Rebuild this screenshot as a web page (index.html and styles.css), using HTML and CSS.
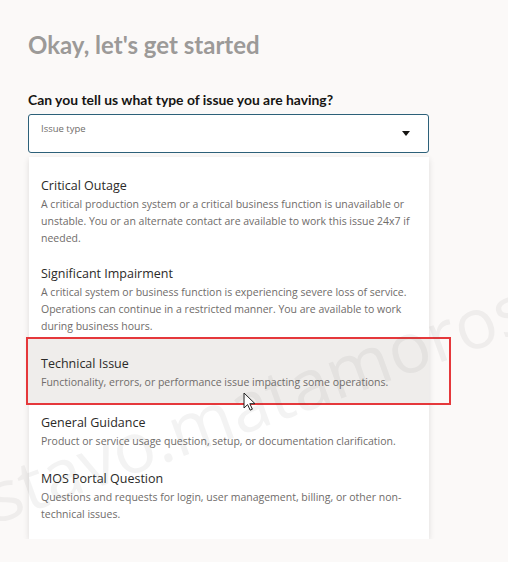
FILE: index.html
```html
<!DOCTYPE html>
<html lang="en">
<head>
  <meta charset="UTF-8" />
  <meta name="viewport" content="width=device-width, initial-scale=1.0"/>
  <title>Create service request</title>
  <link rel="stylesheet" href="styles.css">
</head>
<body>

  <main class="page">
    <h1>Okay, let's get started</h1>

    <p class="question">Can you tell us what type of issue you are having?</p>

    <div class="select">
      <span class="select-label">Issue type</span>
      <svg class="select-arrow" width="8" height="5" viewBox="0 0 8 5"><path d="M0 0h8L4 5z" fill="#161513"/></svg>
    </div>

    <ul class="menu">
      <li class="option">
        <div class="option-title">Critical Outage</div>
        <div class="option-desc">A critical production system or a critical business function is unavailable or unstable. You or an alternate contact are available to work this issue 24x7 if needed.</div>
      </li>
      <li class="option">
        <div class="option-title">Significant Impairment</div>
        <div class="option-desc">A critical system or business function is experiencing severe loss of service. Operations can continue in a restricted manner. You are available to work during business hours.</div>
      </li>
      <li class="option hover">
        <div class="option-title">Technical Issue</div>
        <div class="option-desc">Functionality, errors, or performance issue impacting some operations.</div>
        <span class="mark"></span>
        <svg class="cursor" width="13" height="19" viewBox="0 0 13 19"><path d="M1 1v15l3.6-3.4 2.6 5.6 2.2-1-2.6-5.5H12z" fill="#fff" stroke="#222" stroke-width="1" stroke-linejoin="round"/></svg>
      </li>
      <li class="option">
        <div class="option-title">General Guidance</div>
        <div class="option-desc">Product or service usage question, setup, or documentation clarification.</div>
      </li>
      <li class="option">
        <div class="option-title">MOS Portal Question</div>
        <div class="option-desc">Questions and requests for login, user management, billing, or other non-technical issues.</div>
      </li>
    </ul>
  </main>

  <div class="watermark-layer">
    <div class="watermark">gustavo.matamoros</div>
  </div>

</body>
</html>
```

FILE: styles.css
```css
body {
  margin: 0;
  background-color: #fbf9f8;
  font-family: "Open Sans", "Noto Sans", sans-serif;
  color: #161513;
  overflow: hidden;
}

.page {
  width: 401px;
  padding: 29px 0 0 28px;
}

h1 {
  margin: 0;
  font-family: Lato, "Open Sans", sans-serif;
  font-size: 24px;
  line-height: 32px;
  font-weight: 700;
  color: #9c9a98;
}

.question {
  margin: 30px 0 5px;
  font-family: Lato, "Open Sans", sans-serif;
  font-size: 13.9px;
  line-height: 18px;
  font-weight: 700;
}

.select {
  position: relative;
  height: 37px;
  border: 1.5px solid #2c6079;
  border-radius: 3px;
  background-color: #fff;
  padding: 0 12px;
}

.select-label {
  display: block;
  padding-top: 7px;
  font-size: 9.5px;
  line-height: 14px;
  color: #6f6c6a;
}

.select-arrow {
  position: absolute;
  right: 18px;
  top: 16px;
}

.menu {
  list-style: none;
  margin: 4px 0 0 1px;
  padding: 11px 0 7px;
  width: 400px;
  background-color: #fff;
  box-shadow: 0 2px 6px rgba(0, 0, 0, 0.12);
}

.option {
  position: relative;
  padding: 8px 12px 9px;
}

.option:last-child {
  padding-top: 10px;
}

.option-title {
  font-size: 12.5px;
  line-height: 20px;
  color: #2b2a28;
}

.option-desc {
  font-size: 10.5px;
  line-height: 17px;
  color: #6f6c6a;
}

.option.hover {
  background-color: #efedeb;
  margin: -5px 0 2px;
  padding-top: 15px;
  padding-bottom: 12px;
}

.mark {
  position: absolute;
  left: -3px;
  right: -22px;
  top: -2px;
  bottom: -2px;
  border: 2.5px solid #e5383b;
}

.cursor {
  position: absolute;
  left: 214px;
  top: 53px;
}

.watermark-layer {
  position: fixed;
  inset: 0;
  overflow: hidden;
  pointer-events: none;
}

.watermark {
  position: absolute;
  left: -76px;
  top: 489px;
  transform: rotate(-20deg);
  transform-origin: left bottom;
  font-size: 70px;
  line-height: 70px;
  font-weight: 400;
  color: rgba(90, 80, 80, 0.07);
  white-space: nowrap;
}
```
